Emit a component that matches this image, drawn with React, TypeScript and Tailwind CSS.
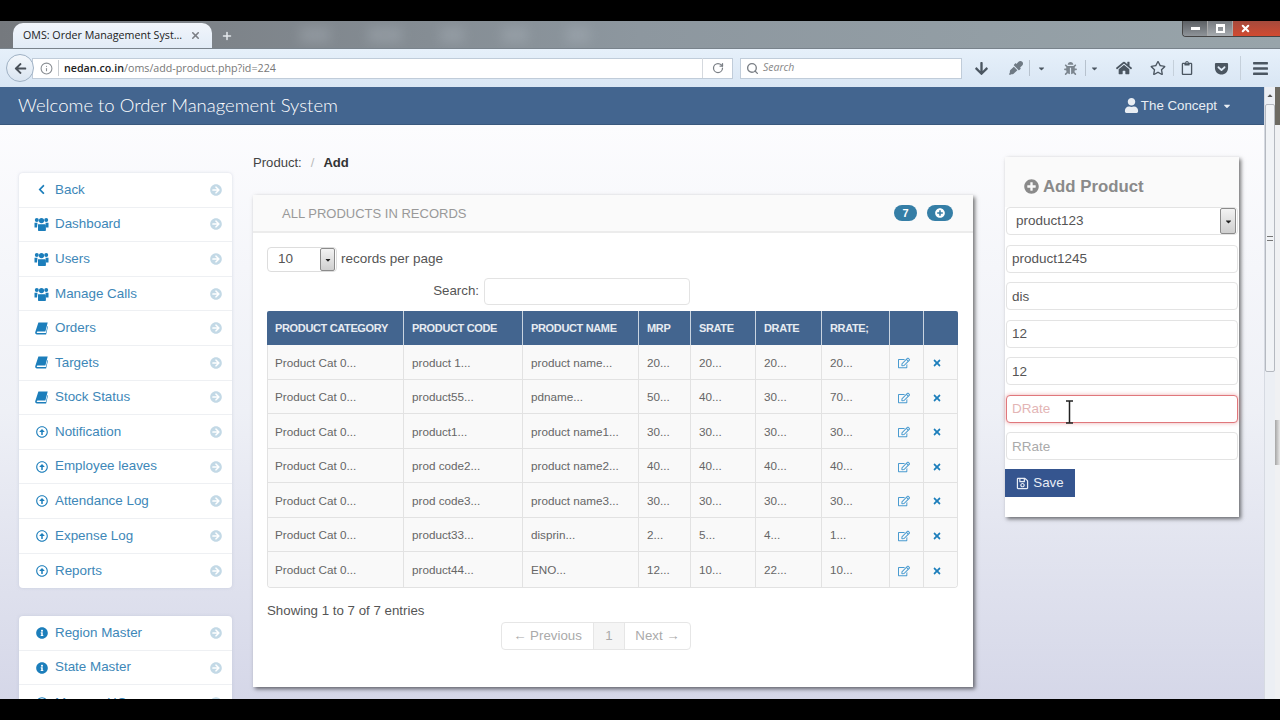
import { Info, RotateCw, Search, X, Plus } from "lucide-react";
import {
  FaArrowCircleRight,
  FaArrowDown,
  FaBars,
  FaCaretDown,
  FaChevronLeft,
  FaBug,
  FaEyeDropper,
  FaGetPocket,
  FaHome,
  FaInfoCircle,
  FaPlusCircle,
  FaRegArrowAltCircleUp,
  FaRegClipboard,
  FaRegEdit,
  FaRegSave,
  FaRegStar,
  FaTimes,
  FaUser,
  FaArrowLeft,
} from "react-icons/fa";

function UsersIcon() {
  return (
    <svg width="15" height="14" viewBox="0 0 15 14" fill="currentColor">
      <circle cx="2.8" cy="3" r="2" />
      <circle cx="12.2" cy="3" r="2" />
      <circle cx="7.5" cy="3.6" r="2.6" />
      <path d="M.5 5.8h3L3 10.5H.5zM11.5 5.8h3v4.7H12z" />
      <path d="M4 7.2h7c.6 0 .9.4.9 1V13c0 .6-.4 1-1 1H5c-.6 0-1-.4-1-1V8.2c0-.6.1-1 0-1z" />
    </svg>
  );
}

function BookIcon() {
  return (
    <svg width="13" height="13" viewBox="0 0 13 13" fill="currentColor">
      <path d="M3.4.5h9.3L10.4 9.6H2.6c-1 0-1.2 1.4-.2 1.4h8.4l1.7-7 .5.5-1.9 8H2C.6 12.500 0 11.500.2 10.300z" />
    </svg>
  );
}

const MAIN_MENU = [
  { label: "Back", icon: <FaChevronLeft size={11} /> },
  { label: "Dashboard", icon: <UsersIcon /> },
  { label: "Users", icon: <UsersIcon /> },
  { label: "Manage Calls", icon: <UsersIcon /> },
  { label: "Orders", icon: <BookIcon /> },
  { label: "Targets", icon: <BookIcon /> },
  { label: "Stock Status", icon: <BookIcon /> },
  { label: "Notification", icon: <FaRegArrowAltCircleUp size={12} /> },
  { label: "Employee leaves", icon: <FaRegArrowAltCircleUp size={12} /> },
  { label: "Attendance Log", icon: <FaRegArrowAltCircleUp size={12} /> },
  { label: "Expense Log", icon: <FaRegArrowAltCircleUp size={12} /> },
  { label: "Reports", icon: <FaRegArrowAltCircleUp size={12} /> },
];

const MASTER_MENU = [
  { label: "Region Master", icon: <FaInfoCircle size={12} /> },
  { label: "State Master", icon: <FaInfoCircle size={12} /> },
  { label: "Manage HQ", icon: <FaRegArrowAltCircleUp size={12} /> },
];

const HEADERS = ["PRODUCT CATEGORY", "PRODUCT CODE", "PRODUCT NAME", "MRP", "SRATE", "DRATE", "RRATE;", "", ""];

const ROWS = [
  ["product 1...", "product name...", "20...", "20...", "20...", "20..."],
  ["product55...", "pdname...", "50...", "40...", "30...", "70..."],
  ["product1...", "product name1...", "30...", "30...", "30...", "30..."],
  ["prod code2...", "product name2...", "40...", "40...", "40...", "40..."],
  ["prod code3...", "product name3...", "30...", "30...", "30...", "30..."],
  ["product33...", "disprin...", "2...", "5...", "4...", "1..."],
  ["product44...", "ENO...", "12...", "10...", "22...", "10..."],
];

const TAB_BLOBS = ["w-[30px]", "w-[34px]", "w-[24px]", "w-[26px]", "w-[24px]"];

const GRID = "grid grid-cols-[137px_119px_116px_52px_65px_66px_68px_34px_34px]";

function SideMenu({ items }: { items: typeof MAIN_MENU }) {
  return (
    <div className="rounded-[4px] bg-white shadow-[0_0_3px_rgba(180,185,205,0.5)]">
      {items.map((item) => (
        <div
          key={item.label}
          className="flex h-[34.6px] items-center border-b border-[#eef0f3] pl-[12px] pr-[10px] last:border-b-0"
        >
          <span className="flex w-[21px] justify-center text-[#1c7ebb]">{item.icon}</span>
          <span className="ml-[3px] text-[13.4px] text-[#3d87b8]">{item.label}</span>
          <FaArrowCircleRight size={12} className="ml-auto text-[#c3d9e6]" />
        </div>
      ))}
    </div>
  );
}

function FormInput({ value, placeholder, error }: { value?: string; placeholder?: string; error?: boolean }) {
  return (
    <input
      readOnly
      value={value ?? ""}
      placeholder={placeholder}
      className={`block h-[28px] w-[232px] rounded-[4px] border bg-white px-[5px] text-[13.5px] text-[#555] outline-none ${
        error
          ? "border-[#e0777c] shadow-[0_0_4px_rgba(224,119,124,0.6)] placeholder:text-[#e3b5b5]"
          : "border-[#e3e3e3] placeholder:text-[#aaa]"
      }`}
    />
  );
}

function SelectArrow() {
  return (
    <span className="flex h-[26px] w-[16px] items-center justify-center rounded-[2px] border border-[#8b8b8b] bg-gradient-to-b from-[#f3f3f3] to-[#cfcfcf] text-[#222]">
      <FaCaretDown size={9} />
    </span>
  );
}

function TextCursor() {
  return (
    <svg className="absolute left-[60px] top-[243px]" width="9" height="24" viewBox="0 0 9 24" fill="none" stroke="#222" strokeWidth="1.5">
      <path d="M1 1h7M4.500 1v22M1 23h7" />
    </svg>
  );
}

function BrowserChrome() {
  return (
    <>
      <div className="relative flex h-[27px] items-end overflow-hidden bg-gradient-to-r from-[#75797e] via-[#8d979f] to-[#98a4aa] [font-family:'Open_Sans',sans-serif]">
        <div className="absolute left-[300px] top-[6px] flex gap-[38px] opacity-30 blur-[6px]">
          {TAB_BLOBS.map((w, i) => (
            <span key={i} className={`h-[16px] bg-[#b4bcc4] ${w}`} />
          ))}
        </div>
        <div className="ml-[13px] flex h-[25px] w-[199px] items-center rounded-t-[10px] bg-gradient-to-b from-[#f1f5fb] to-[#e2ecf7] pl-[10px] pr-[11px] text-[10.7px] text-[#222]">
          <span className="whitespace-nowrap">OMS: Order Management Syst...</span>
          <X size={11} strokeWidth={3.5} className="ml-auto text-[#7b7f85]" />
        </div>
        <Plus size={12} strokeWidth={3} className="z-10 mb-[6px] ml-[9px] text-[#e4e8ec]" />
        <div className="absolute left-[1182px] top-0 flex h-[16px] w-[98px] overflow-hidden rounded-bl-[4px] border-b border-l border-[#444]">
          <span className="flex w-[25px] items-center justify-center border-r border-[#aaa] bg-gradient-to-b from-[#5c6064] to-[#8f9499]">
            <span className="h-[3px] w-[9px] bg-white" />
          </span>
          <span className="flex w-[25px] items-center justify-center border-r border-[#aaa] bg-gradient-to-b from-[#777b80] to-[#a6abaf]">
            <span className="h-[9px] w-[9px] border-2 border-t-[3px] border-white" />
          </span>
          <span className="flex flex-1 items-center justify-center bg-gradient-to-b from-[#a54a3c] to-[#d24a30] pr-[22px] text-white">
            <X size={11} strokeWidth={4.5} />
          </span>
        </div>
      </div>
      <div className="flex h-[39px] items-center border-t border-[#79838c] bg-gradient-to-b from-[#e6f0fa] to-[#d9e6f4] pl-[6px] [font-family:'Open_Sans',sans-serif]">
        <span className="z-10 flex h-[28px] w-[28px] items-center justify-center rounded-full border border-[#9fb1c4] bg-gradient-to-b from-[#f4f8fc] to-[#dae5f1] text-[#4a5159]">
          <FaArrowLeft size={13} />
        </span>
        <div className="-ml-[2px] flex h-[21px] w-[701px] items-center border border-[#c0ccd9] bg-white pl-[7px]">
          <Info size={13} className="text-[#8a8f94]" />
          <span className="mx-[5px] h-[16px] w-px bg-[#c8ccd0]" />
          <span className="text-[10.7px] font-semibold text-[#222]">nedan.co.in</span>
          <span className="text-[10.7px] text-[#777]">/oms/add-product.php?id=224</span>
          <span className="ml-auto h-[20px] w-px bg-[#d5d9de]" />
          <span className="flex w-[29px] justify-center">
            <RotateCw size={12} strokeWidth={2.5} className="text-[#7a7f85]" />
          </span>
        </div>
        <div className="ml-[7px] flex h-[21px] w-[222px] items-center border border-[#c0ccd9] bg-white pl-[5px]">
          <Search size={13} strokeWidth={2.5} className="text-[#7a7f85]" />
          <span className="ml-[4px] text-[10.5px] italic text-[#888]">Search</span>
        </div>
        <div className="flex items-center text-[#4b5661]">
          <FaArrowDown size={15} className="ml-[12px]" />
          <FaEyeDropper size={14} className="ml-[20px] text-[#6f7a84]" />
          <span className="ml-[6px] h-[16px] w-px bg-[#b7c2ce]" />
          <FaCaretDown size={9} className="ml-[7px]" />
          <FaBug size={13} className="ml-[18px] text-[#7c868f]" />
          <span className="ml-[8px] h-[16px] w-px bg-[#b7c2ce]" />
          <FaCaretDown size={9} className="ml-[4px]" />
          <FaHome size={16} className="ml-[17px]" />
          <FaRegStar size={16} className="ml-[18px]" />
          <span className="ml-[7px] h-[16px] w-px bg-[#c5d0db]" />
          <FaRegClipboard size={14} className="ml-[6px]" />
          <FaGetPocket size={15} className="ml-[20px]" />
          <span className="ml-[11px] h-[24px] w-px bg-[#c5d0db]" />
          <FaBars size={17} className="ml-[11px]" />
        </div>
      </div>
    </>
  );
}

export default function App() {
  return (
    <div className="flex h-[720px] w-[1280px] flex-col overflow-hidden bg-black [font-family:'Liberation_Sans',Arial,sans-serif]">
      <div className="h-[21px] shrink-0 bg-black" />
      <BrowserChrome />
      <div className="flex h-[612px] shrink-0">
        <div className="flex w-[1264px] flex-col">
          <header className="flex h-[38px] shrink-0 items-center justify-between border-b border-[#39587d] bg-[#43658f] pl-[18px] pr-[32px] text-white">
            <span className="text-[18.5px] font-light [font-family:Lato,sans-serif]">Welcome to Order Management System</span>
            <span className="flex items-center text-[13.3px] text-[#e8edf3]">
              <FaUser size={15} className="mr-[2px]" />
              The Concept
              <FaCaretDown size={10} className="ml-[5px]" />
            </span>
          </header>

          <div className="flex min-h-0 flex-1 overflow-hidden bg-gradient-to-b from-[#fcfcfe] via-[#eef0f6] to-[#d5d7e8] pl-[19px]">
            <aside className="mt-[47px] flex w-[213px] shrink-0 flex-col gap-[28px] pt-px">
              <SideMenu items={MAIN_MENU} />
              <SideMenu items={MASTER_MENU} />
            </aside>

            <main className="ml-[21px] w-[720px] shrink-0">
              <div className="mt-[30px] flex h-[16px] items-center text-[13.1px] text-[#444]">
                Product:
                <span className="mx-[9px] text-[#bbb]">/</span>
                <b className="text-[#333]">Add</b>
              </div>
              <div className="mt-[24px] h-[492px] bg-white shadow-[2px_2px_4px_rgba(0,0,0,0.55)]">
                <div className="flex h-[38px] items-center border-b-2 border-[#ececec] bg-[#fafafa] pl-[29px] pr-[20px]">
                  <span className="pt-[2px] text-[13px] text-[#999]">ALL PRODUCTS IN RECORDS</span>
                  <span className="ml-auto flex h-[16px] w-[23px] items-center justify-center rounded-full bg-[#357ea6] text-[11px] font-bold text-white">
                    7
                  </span>
                  <span className="ml-[10px] flex h-[16px] w-[26px] items-center justify-center rounded-full bg-[#357ea6] text-white">
                    <FaPlusCircle size={10} />
                  </span>
                </div>

                <div className="pl-[14px] pr-[15px]">
                  <div className="mt-[14px] flex h-[25px] items-center text-[13.5px] text-[#555]">
                    <div className="flex h-[25px] w-[70px] items-center justify-between rounded-[4px] border border-[#ddd] pl-[10px] pr-px">
                      10
                      <span className="flex h-[23px] w-[15px] items-center justify-center rounded-[2px] border border-[#8b8b8b] bg-gradient-to-b from-[#f3f3f3] to-[#cfcfcf] text-[#222]">
                        <FaCaretDown size={8} />
                      </span>
                    </div>
                    <span className="ml-[4px]">records per page</span>
                  </div>
                  <div className="mt-[6px] flex h-[27px] items-center justify-end pr-[268px] text-[13.3px] text-[#555]">
                    <span className="pb-[2px]">Search:</span>
                    <div className="ml-[5px] h-[27px] w-[206px] rounded-[4px] border border-[#e3e3e3]" />
                  </div>

                  <div className="mt-[6px] w-[691px]">
                    <div className={`${GRID} h-[34px] rounded-t-[2px] bg-[#43658f]`}>
                      {HEADERS.map((h, i) => (
                        <div
                          key={i}
                          className="flex items-center whitespace-nowrap border-r border-[#c9d4e0] pl-[8px] text-[11px] font-bold tracking-[-0.35px] text-[#e6ebf1] last:border-r-0"
                        >
                          {h}
                        </div>
                      ))}
                    </div>
                    <div className="overflow-hidden rounded-b-[4px] border-x border-b border-[#e2e2e2]">
                      {ROWS.map((row, i) => (
                        <div key={i} className={`${GRID} -ml-px h-[34.5px] border-b border-[#e2e2e2] bg-[#f9f9f9] text-[11.7px] text-[#666] last:border-b-0`}>
                          {["Product Cat 0...", ...row].map((cell, j) => (
                            <div key={j} className="flex items-center border-r border-[#e2e2e2] pl-[8px] pt-[2px]">
                              {cell}
                            </div>
                          ))}
                          <div className="flex items-center border-r border-[#e2e2e2] pl-[8px] pt-[3px] text-[#4a9bd0]">
                            <FaRegEdit size={12} />
                          </div>
                          <div className="flex items-center pl-[8px] pt-[3px] text-[#1c7ebb]">
                            <FaTimes size={10} />
                          </div>
                        </div>
                      ))}
                    </div>
                  </div>

                  <div className="mt-[15px] text-[13.3px] leading-[16px] text-[#555]">Showing 1 to 7 of 7 entries</div>
                  <div className="ml-[234px] mt-[3px] flex h-[28px] w-[190px] items-center rounded-[4px] border border-[#e6e6e6] text-[13.3px] text-[#aaa]">
                    <span className="flex h-full w-[92px] items-center justify-center border-r border-[#e6e6e6]">← Previous</span>
                    <span className="flex h-full w-[31px] items-center justify-center border-r border-[#e6e6e6] bg-[#f5f5f5]">1</span>
                    <span className="flex flex-1 items-center justify-center">Next →</span>
                  </div>
                </div>
              </div>
            </main>

            <section className="relative ml-[32px] mt-[32px] h-[360px] w-[234px] shrink-0 bg-white shadow-[2px_2px_4px_rgba(0,0,0,0.55)]">
              <div className="flex h-[50px] items-center bg-[#fafafa] pl-[19px] pt-[9px] text-[16.8px] font-bold text-[#8a8a8a]">
                <FaPlusCircle size={15} className="mr-[4px]" />
                Add Product
              </div>
              <div className="flex flex-col gap-[9.5px] pl-px">
                <div className="flex h-[28px] w-[232px] items-center justify-between rounded-[4px] border border-[#e3e3e3] bg-white pl-[9px] pr-px text-[13.5px] text-[#555]">
                  product123
                  <SelectArrow />
                </div>
                <FormInput value="product1245" />
                <FormInput value="dis" />
                <FormInput value="12" />
                <FormInput value="12" />
                <FormInput placeholder="DRate" error />
                <FormInput placeholder="RRate" />
              </div>
              <button className="mt-[9px] flex h-[28px] w-[70px] items-center justify-center gap-[4px] bg-[#35558f] text-[13.3px] text-[#e8edf5]">
                <FaRegSave size={13} />
                Save
              </button>
              <TextCursor />
            </section>
          </div>
        </div>

        <div className="flex w-[11px] shrink-0 flex-col border-l border-[#d6dae2] bg-[#eceff4]">
          <div className="flex h-[17px] items-center justify-center text-[#555]">
            <FaCaretDown size={8} className="rotate-180" />
          </div>
          <div className="flex h-[268px] flex-col items-center rounded-[2px] border border-[#b5b9c0] bg-[#f1f3f6] pt-[131px]">
            <span className="h-[5px] w-[6px] border-y border-[#777]" />
          </div>
        </div>
        <div className="flex w-[5px] shrink-0 flex-col bg-[#f0f1f3]">
          <div className="h-[38px] bg-[#6d6a62]" />
          <div className="mt-[295px] h-[45px] bg-gradient-to-r from-[#a5a5a5] to-[#e8e8e8]" />
        </div>
      </div>
    </div>
  );
}
